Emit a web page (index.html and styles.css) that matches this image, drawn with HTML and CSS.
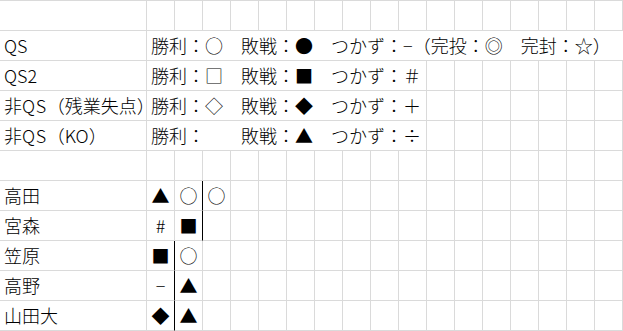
FILE: index.html
```html
<!DOCTYPE html>
<html lang="ja">
<head>
<meta charset="utf-8">
<link rel="stylesheet" href="styles.css">
</head>
<body>
<div class="sheet">
  <!-- row 1: empty -->
  <div class="c"></div><div class="c"></div><div class="c"></div><div class="c"></div><div class="c"></div><div class="c"></div><div class="c"></div><div class="c"></div><div class="c"></div><div class="c"></div><div class="c"></div><div class="c"></div><div class="c"></div><div class="c"></div><div class="c"></div><div class="c"></div><div class="c"></div><div class="c"></div>

  <!-- row 2 -->
  <div class="c t">QS</div>
  <div class="c t lg-all">勝利：○　敗戦：●　つかず：−（完投：◎　完封：☆）</div>

  <!-- row 3 -->
  <div class="c t">QS2</div>
  <div class="c t lg">勝利：□　敗戦：■　つかず：＃</div>
  <div class="c"></div><div class="c"></div><div class="c"></div><div class="c"></div><div class="c"></div><div class="c"></div><div class="c"></div>

  <!-- row 4 -->
  <div class="c t">非<span class="lat">QS</span>（残業失点<span class="half">）</span></div>
  <div class="c t lg">勝利：◇　敗戦：◆　つかず：＋</div>
  <div class="c"></div><div class="c"></div><div class="c"></div><div class="c"></div><div class="c"></div><div class="c"></div><div class="c"></div>

  <!-- row 5 -->
  <div class="c t">非<span class="lat">QS</span>（KO）</div>
  <div class="c t lg">勝利：　　敗戦：▲　つかず：÷</div>
  <div class="c"></div><div class="c"></div><div class="c"></div><div class="c"></div><div class="c"></div><div class="c"></div><div class="c"></div>

  <!-- row 6: empty -->
  <div class="c"></div><div class="c"></div><div class="c"></div><div class="c"></div><div class="c"></div><div class="c"></div><div class="c"></div><div class="c"></div><div class="c"></div><div class="c"></div><div class="c"></div><div class="c"></div><div class="c"></div><div class="c"></div><div class="c"></div><div class="c"></div><div class="c"></div><div class="c"></div>

  <!-- row 7: 高田 -->
  <div class="c t">高田</div>
  <div class="c s">▲</div><div class="c s sep">○</div><div class="c s">○</div>
  <div class="c"></div><div class="c"></div><div class="c"></div><div class="c"></div><div class="c"></div><div class="c"></div><div class="c"></div><div class="c"></div><div class="c"></div><div class="c"></div><div class="c"></div><div class="c"></div><div class="c"></div><div class="c"></div>

  <!-- row 8: 宮森 -->
  <div class="c t">宮森</div>
  <div class="c s">#</div><div class="c s sep">■</div><div class="c s"></div>
  <div class="c"></div><div class="c"></div><div class="c"></div><div class="c"></div><div class="c"></div><div class="c"></div><div class="c"></div><div class="c"></div><div class="c"></div><div class="c"></div><div class="c"></div><div class="c"></div><div class="c"></div><div class="c"></div>

  <!-- row 9: 笠原 -->
  <div class="c t">笠原</div>
  <div class="c s sep">■</div><div class="c s">○</div><div class="c s"></div>
  <div class="c"></div><div class="c"></div><div class="c"></div><div class="c"></div><div class="c"></div><div class="c"></div><div class="c"></div><div class="c"></div><div class="c"></div><div class="c"></div><div class="c"></div><div class="c"></div><div class="c"></div><div class="c"></div>

  <!-- row 10: 高野 -->
  <div class="c t">高野</div>
  <div class="c s sep">−</div><div class="c s">▲</div><div class="c s"></div>
  <div class="c"></div><div class="c"></div><div class="c"></div><div class="c"></div><div class="c"></div><div class="c"></div><div class="c"></div><div class="c"></div><div class="c"></div><div class="c"></div><div class="c"></div><div class="c"></div><div class="c"></div><div class="c"></div>

  <!-- row 11: 山田大 -->
  <div class="c t">山田大</div>
  <div class="c s sep">◆</div><div class="c s">▲</div><div class="c s"></div>
  <div class="c"></div><div class="c"></div><div class="c"></div><div class="c"></div><div class="c"></div><div class="c"></div><div class="c"></div><div class="c"></div><div class="c"></div><div class="c"></div><div class="c"></div><div class="c"></div><div class="c"></div><div class="c"></div>
</div>
</body>
</html>
```

FILE: styles.css
```css
html, body {
  margin: 0;
  padding: 0;
  background: #ffffff;
}

body {
  font-family: "Noto Sans CJK JP", "Noto Sans", sans-serif;
  font-size: 18px;
  font-weight: 300;
  color: #000000;
  width: 623px;
  height: 331px;
  overflow: hidden;
}

.sheet {
  display: grid;
  grid-template-columns: 147px repeat(17, 28px);
  grid-auto-rows: 30px;
  border-top: 1px solid #dadada;
}

.c {
  box-sizing: border-box;
  border-right: 1px solid #dadada;
  border-bottom: 1px solid #dadada;
  overflow: hidden;
  white-space: nowrap;
  line-height: 29px;
}

.t {
  padding-left: 4px;
}

.lat {
  letter-spacing: 0.6px;
}

.half {
  font-feature-settings: "halt" 1;
}

.lg-all {
  grid-column: span 17;
  border-right: none;
}

.lg {
  grid-column: span 10;
}

.s {
  text-align: center;
  padding: 0;
}

.sep {
  border-right: 1px solid #000000;
}
```
